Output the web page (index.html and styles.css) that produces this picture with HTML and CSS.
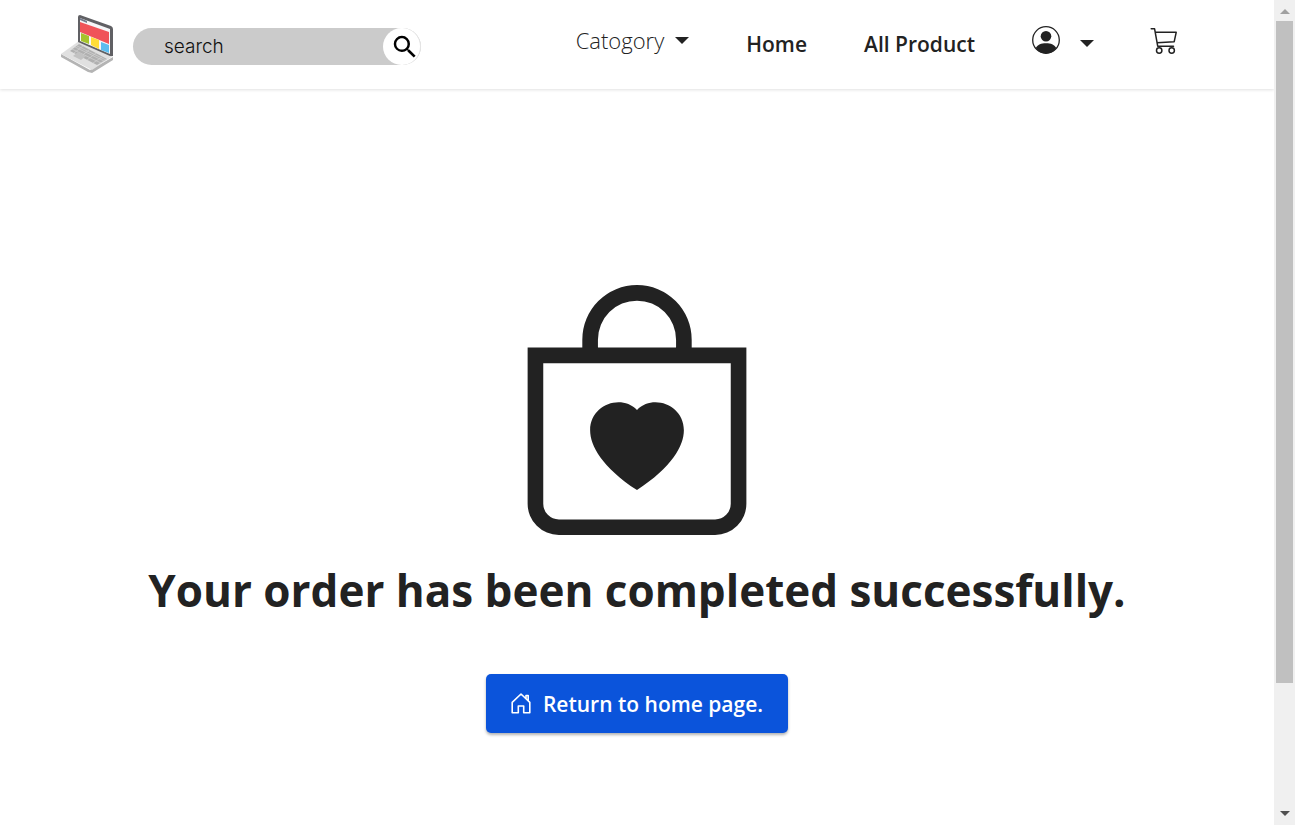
FILE: index.html
```html
<!DOCTYPE html>
<html lang="en">
<head>
<meta charset="utf-8">
<title>Order completed</title>
<link rel="stylesheet" href="styles.css">
</head>
<body>
<div class="page">
  <header class="navbar">
    <a class="logo" href="#" aria-label="Shop">
      <svg viewBox="0 0 54 60" width="54" height="60" aria-hidden="true">
        <path d="M1 40L30 56 53 43V46L32 59 28 58 1 43z" fill="#b4b4b4"/>
        <path d="M1 40L19 27 53 42 32 56z" fill="#e0e0e0"/>
        <path d="M10 37L19 30 47 45 37 51z" fill="#b0b0b0"/>
        <path d="M12 35L41 49M15 33L44 47M17 32L46 46M14 39L23 32M20 43L29 36M27 46L36 39M33 49L42 43" stroke="#d2d2d2" stroke-width=".7"/>
        <path d="M13 42L18 38 26 42 21 46z" fill="#c2c2c2"/>
        <path d="M18 3Q18 1 20 1L51 12Q53 13 53 15V42L50 42 18 28z" fill="#606064"/>
        <path d="M20 4L50 15V40L20 27z" fill="#f6f6f8"/>
        <path d="M20 4L27 7V9L20 6z" fill="#737b8c"/>
        <path d="M20 8L49 18V30L20 18z" fill="#f05359"/>
        <path d="M21 19L29 22V30L21 27z" fill="#a6c42c"/>
        <path d="M31 23L39 26V35L31 31z" fill="#ffdd38"/>
        <path d="M41 28L49 31V39L41 36z" fill="#5bbcee"/>
      </svg>
    </a>
    <form class="search">
      <input class="search-input" type="text" placeholder="search" aria-label="search">
      <button class="search-button" type="button" aria-label="Submit search">
        <svg viewBox="0 0 24 24" width="30" height="30" aria-hidden="true"><path fill="#000" d="M15.5 14h-.79l-.28-.27A6.47 6.47 0 0 0 16 9.5 6.5 6.5 0 1 0 9.5 16c1.61 0 3.09-.59 4.23-1.57l.27.28v.79l5 4.99L20.49 19l-4.99-5zm-6 0C7.01 14 5 11.99 5 9.5S7.01 5 9.5 5 14 7.01 14 9.5 11.99 14 9.5 14z"/></svg>
      </button>
    </form>
    <nav class="menu">
      <button class="dropdown category" type="button">Catogory <span class="caret"></span></button>
      <a class="link" href="#">Home</a>
      <a class="link" href="#">All Product</a>
      <button class="dropdown account" type="button" aria-label="Account">
        <svg viewBox="0 0 28 28" width="28" height="28" aria-hidden="true">
          <circle cx="14" cy="14" r="13.3" fill="none" stroke="#222" stroke-width="1.3"/>
          <circle cx="14" cy="10.3" r="5.3" fill="#222"/>
          <path d="M3.7 22C6 18.500 9 17.300 14 17.300S22 18.500 24.300 22C22 25.700 18 27.500 14 27.500S6 25.700 3.700 22z" fill="#222"/>
        </svg>
        <span class="caret"></span>
      </button>
      <a class="cart" href="#" aria-label="Cart">
        <svg viewBox="0 0 28 28" width="28" height="28" fill="none" stroke="#222" stroke-width="1.500" stroke-linecap="round" stroke-linejoin="round" aria-hidden="true">
          <path d="M1.200 1.800H4.600L7.700 19.200H23.500M5.400 5.300H26.200L24.200 14.700 7 15.700"/>
          <circle cx="9.200" cy="23.500" r="2.700"/><circle cx="21.700" cy="23.500" r="2.700"/>
        </svg>
      </a>
    </nav>
  </header>
  <main class="content">
    <svg class="bag" viewBox="0 0 16 16" width="250" height="250" fill="#222" aria-hidden="true">
      <path fill-rule="evenodd" d="M10.500 3.500a2.500 2.500 0 0 0-5 0V4h5v-.5Zm1 0V4H15v10a2 2 0 0 1-2 2H3a2 2 0 0 1-2-2V4h3.500v-.5a3.500 3.500 0 1 1 7 0ZM14 14V5H2v9a1 1 0 0 0 1 1h10a1 1 0 0 0 1-1ZM8 7.993c1.664-1.711 5.825 1.283 0 5.132-5.825-3.850-1.664-6.843 0-5.132Z"/>
    </svg>
    <h1 class="title">Your order has been completed successfully.</h1>
    <button class="home-button" type="button">
      <svg viewBox="0 0 20 21" width="20" height="21" fill="none" stroke="#fff" stroke-width="1.600" stroke-linejoin="round" aria-hidden="true">
        <path d="M1.200 19.800V9.300L10 1 18.800 9.300V19.800H12.700V13H7.300V19.800zM15 5.300V2.500H17.200V7.500"/>
      </svg>
      Return to home page.
    </button>
  </main>
</div>
<div class="scrollbar" aria-hidden="true">
  <span class="arrow arrow-up"></span>
  <span class="track"><span class="thumb"></span></span>
  <span class="arrow arrow-down"></span>
</div>
</body>
</html>
```
FILE: styles.css
```css
* { box-sizing: border-box; }
body {
  display: flex;
  height: 100vh;
  margin: 0;
  background: #fff;
  color: #222;
  font-family: "Open Sans", "Noto Sans", sans-serif;
}
button { padding: 0; border: 0; background: none; color: inherit; font: inherit; cursor: pointer; }
a { color: inherit; text-decoration: none; }
svg { display: block; flex: none; }
.page { flex: 1; min-width: 0; overflow: hidden; }
.navbar {
  display: flex;
  align-items: flex-start;
  height: 89px;
  padding: 14px 96px 0 60px;
  box-shadow: 0 1px 3px rgba(0, 0, 0, .12);
}
.search {
  display: flex;
  width: 288px;
  height: 37px;
  margin: 14px 0 0 19px;
  border-radius: 19px;
  background: #cbcbcb;
}
.search-input {
  flex: 1;
  min-width: 0;
  padding: 0 0 0 31px;
  border: 0;
  background: none;
  outline: 0;
  font: 300 19px/28px "Inter", sans-serif;
}
.search-input::placeholder { color: #111; opacity: 1; }
.search-button {
  display: flex;
  align-items: center;
  justify-content: center;
  width: 38px;
  padding-left: 7px;
  border: 1px solid #e4e4e4;
  border-width: 0 1px 0 0;
  border-radius: 19px;
  background: #fff;
}
.menu { display: flex; align-items: flex-start; margin-left: auto; font-size: 21px; line-height: 30px; }
.dropdown { display: flex; align-items: center; }
.category { gap: 11px; margin: 11px 57px 0 0; font-size: 22px; font-weight: 300; }
.caret { border: 7px solid transparent; border-top-color: #222; border-bottom: 0; }
.link { margin: 15px 57px 0 0; font-weight: 600; }
.account { gap: 20px; margin: 12px 56px 0 0; }
.account .caret { margin-top: 6px; }
.cart { margin-top: 13px; }
.content { display: flex; flex-direction: column; align-items: center; padding-top: 196px; }
.title { margin: 20px 0 48px; font-size: 44px; line-height: 71px; font-weight: 700; white-space: nowrap; }
.home-button {
  display: flex;
  align-items: center;
  gap: 12px;
  height: 59px;
  padding: 0 25px;
  border-radius: 5px;
  background: #0b54db;
  box-shadow: 0 2px 3px rgba(0, 0, 0, .3);
  color: #fff;
  font-size: 21px;
  font-weight: 600;
}
.scrollbar { display: flex; flex-direction: column; align-items: center; width: 21px; background: #f0f0f0; }
.arrow { border: 5px solid transparent; }
.arrow-up { margin: 9px 0 7px; border-top: 0; border-bottom-color: #a0a0a0; }
.arrow-down { margin: 7px 0 9px; border-bottom: 0; border-top-color: #505050; }
.track { flex: 1; width: 17px; }
.thumb { display: block; height: 84.5%; background: #c0c0c0; }
```
